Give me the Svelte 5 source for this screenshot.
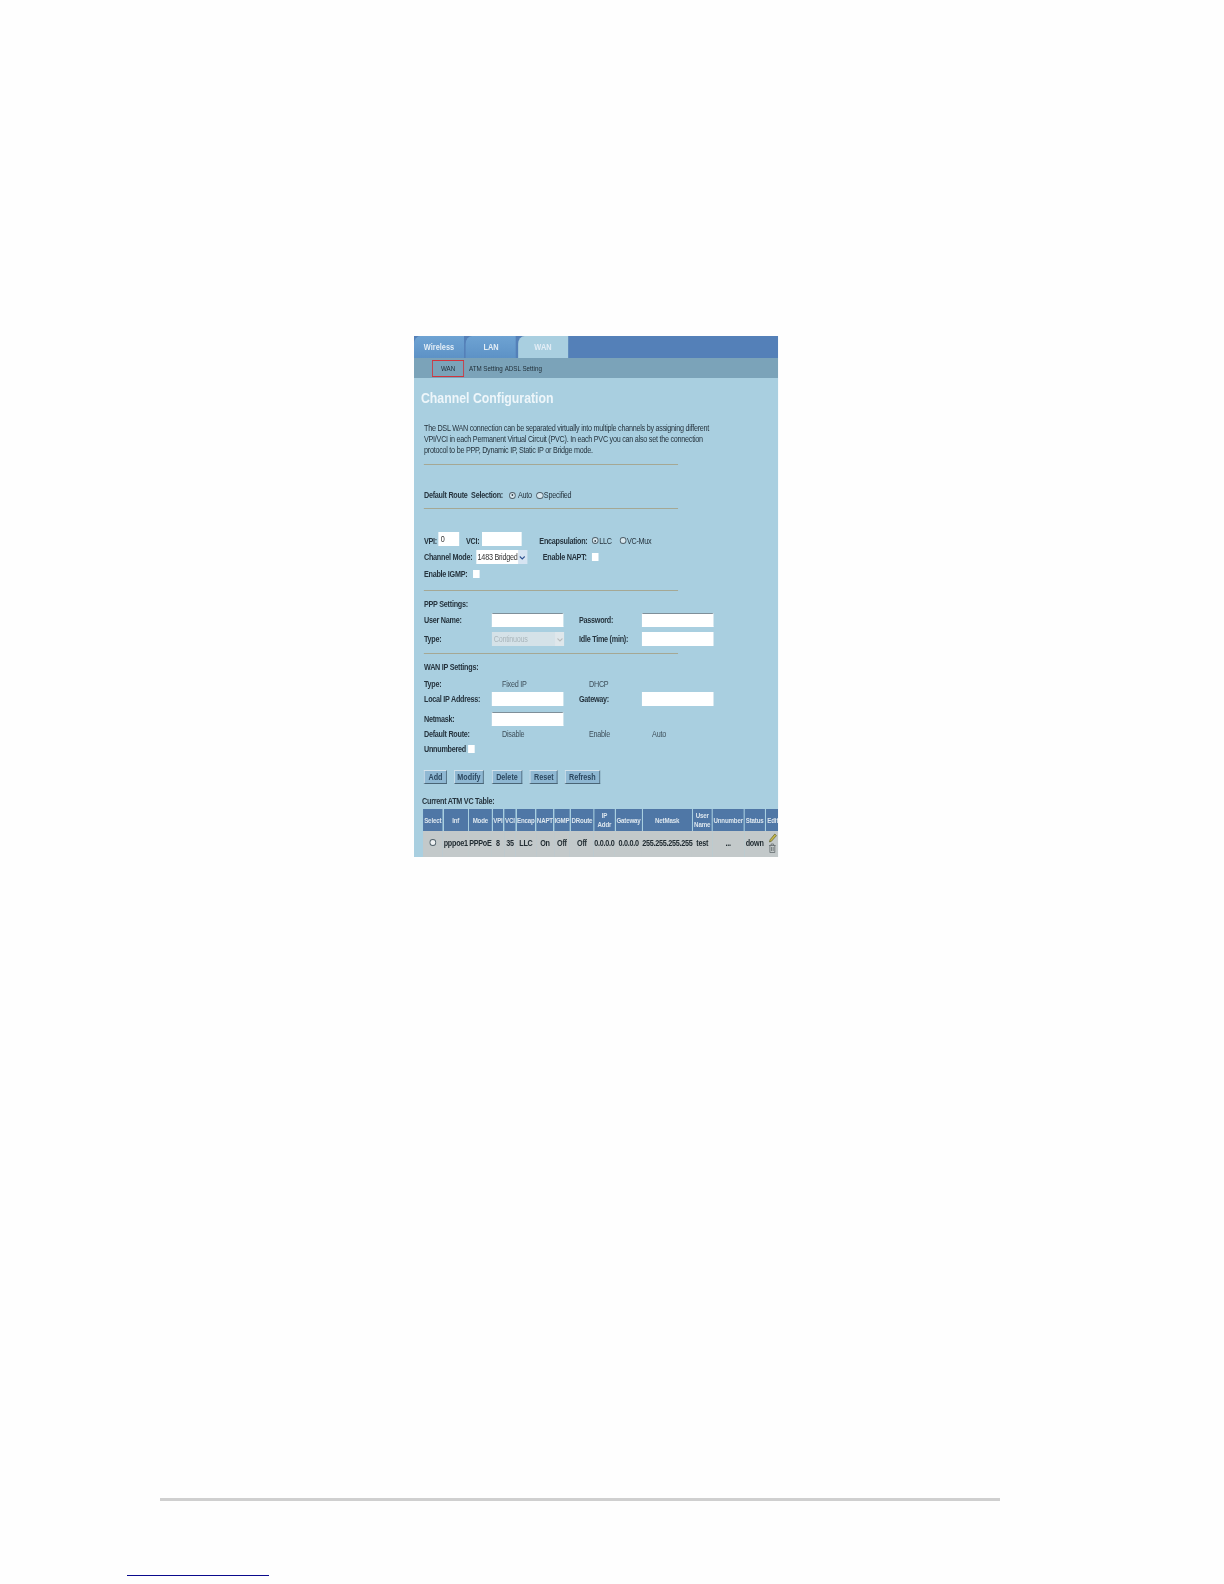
<script>
    let columns = [
        { name: "Select", width: 24.4 },
        { name: "Inf", width: 31.7 },
        { name: "Mode", width: 28.3 },
        { name: "VPI", width: 14.6 },
        { name: "VCI", width: 14.6 },
        { name: "Encap", width: 24.4 },
        { name: "NAPT", width: 22 },
        { name: "IGMP", width: 19.5 },
        { name: "DRoute", width: 29.3 },
        { name: "IP Addr", width: 25.6 },
        { name: "Gateway", width: 33.2 },
        { name: "NetMask", width: 61 },
        { name: "User Name", width: 24.4 },
        { name: "Unnumber", width: 39 },
        { name: "Status", width: 25.6 },
        { name: "Edit", width: 18.3 }
    ];

    let cells = ["pppoe1", "PPPoE", "8", "35", "LLC", "On", "Off", "Off", "0.0.0.0", "0.0.0.0", "255.255.255.255", "test", "...", "down"];
</script>

<div class="page">
    <!-- the whole panel is a squeezed screenshot, so it is built wider and scaled down on x -->
    <div class="panel">
        <div class="tabs">
            <div class="tab">Wireless</div>
            <div class="tab">LAN</div>
            <div class="tab active">WAN</div>
        </div>
        <div class="subbar">
            <span class="sub current">WAN</span>
            <span class="sub">ATM Setting</span>
            <span class="sub">ADSL Setting</span>
        </div>

        <div class="content">
            <h1>Channel Configuration</h1>
            <p class="intro">
                The DSL WAN connection can be separated virtually into multiple channels by assigning different<br />
                VPI/VCI in each Permanent Virtual Circuit (PVC). In each PVC you can also set the connection<br />
                protocol to be PPP, Dynamic IP, Static IP or Bridge mode.
            </p>
            <hr class="rule-a" />

            <div class="row route">
                <b class="route-label">Default Route&nbsp; Selection:</b>
                <span class="radio on"></span><span class="auto-text">Auto</span>
                <span class="radio"></span><span class="after-radio">Specified</span>
            </div>
            <hr class="rule-b" />

            <div class="row vpi">
                <b class="vpi-label">VPI:</b>
                <input class="small" value="0" />
                <b class="vci-label">VCI:</b>
                <input class="medium" />
                <b class="encap-label">Encapsulation:</b>
                <span class="radio on"></span><span class="llc-text">LLC</span>
                <span class="radio"></span><span class="after-radio">VC-Mux</span>
            </div>
            <div class="row mode">
                <b class="mode-label">Channel Mode:</b>
                <span class="select">1483 Bridged<span class="arrow">
                    <svg width="8" height="7" viewBox="0 0 8 7"><path d="M1 2.5 L4 5 L7 2.5" fill="none" stroke="#2c4f8f" stroke-width="1.3" /></svg>
                </span></span>
                <b class="napt-label">Enable NAPT:</b>
                <span class="check"></span>
            </div>
            <div class="row igmp">
                <b class="igmp-label">Enable IGMP:</b>
                <span class="check"></span>
            </div>
            <hr class="rule-c" />

            <div class="row ppp-title"><b>PPP Settings:</b></div>
            <div class="grid ppp">
                <b>User Name:</b>
                <input class="wide" />
                <b>Password:</b>
                <input class="wide" />
                <b>Type:</b>
                <span class="select disabled">Continuous<span class="arrow">
                    <svg width="8" height="7" viewBox="0 0 8 7"><path d="M1 2.5 L4 5 L7 2.5" fill="none" stroke="#b9bdbf" stroke-width="1.2" /></svg>
                </span></span>
                <b>Idle Time (min):</b>
                <input class="wide flat" />
            </div>
            <hr class="rule-d" />

            <div class="row wan-title"><b>WAN IP Settings:</b></div>
            <div class="grid wan">
                <b>Type:</b>
                <span class="opt">Fixed IP</span>
                <span class="opt">DHCP</span>
                <span></span>
                <b>Local IP Address:</b>
                <input class="wide flat" />
                <b>Gateway:</b>
                <input class="wide flat" />
                <b>Netmask:</b>
                <input class="wide" />
                <span></span>
                <span></span>
                <b>Default Route:</b>
                <span class="opt">Disable</span>
                <span class="opt">Enable</span>
                <span class="opt">Auto</span>
            </div>
            <div class="row unnumbered">
                <b class="unnumbered-label">Unnumbered</b>
                <span class="check"></span>
            </div>

            <div class="buttons">
                <button class="b-add">Add</button>
                <button class="b-modify">Modify</button>
                <button class="b-delete">Delete</button>
                <button class="b-reset">Reset</button>
                <button class="b-refresh">Refresh</button>
            </div>

            <div class="table-title"><b>Current ATM VC Table:</b></div>
            <table>
                <colgroup>
                    {#each columns as col}
                        <col style="width: {col.width}px" />
                    {/each}
                </colgroup>
                <thead>
                    <tr>
                        {#each columns as col}
                            <th>
                                {#each col.name.split(" ") as word}
                                    <span class="word">{word}</span>
                                {/each}
                            </th>
                        {/each}
                    </tr>
                </thead>
                <tbody>
                    <tr>
                        <td><span class="radio"></span></td>
                        {#each cells as cell}
                            <td>{cell}</td>
                        {/each}
                        <td class="edit">
                            <svg width="11" height="10" viewBox="0 0 11 10">
                                <path d="M1.5 9 L2.2 6.8 L8 1 L10 2.6 L4 8.2 Z" fill="#c8b84a" stroke="#55581f" stroke-width="0.7" />
                            </svg>
                            <svg width="10" height="10" viewBox="0 0 10 10">
                                <path d="M1 2.5 H9 M3.5 2.5 V1 H6.5 V2.5 M2 2.5 V9.5 H8 V2.5 M4 4 V8 M6 4 V8" fill="none" stroke="#5c6468" stroke-width="0.8" />
                            </svg>
                        </td>
                    </tr>
                </tbody>
            </table>
        </div>
    </div>

    <div class="footer-rule"></div>
    <div class="footnote-rule"></div>
</div>

<style>
    :global(body) {
        margin: 0;
        background: #fefefe;
    }
    .page {
        width: 1224px;
        height: 1584px;
        padding-top: 336px;
        box-sizing: border-box;
        position: relative;
        overflow: hidden;
    }
    .panel {
        width: 444px;
        height: 521px;
        margin-left: 414px;
        background: #a9cfe0;
        overflow: hidden;
        font-family: "Liberation Sans", Arial, sans-serif;
        font-size: 8.8px;
        letter-spacing: -0.31px;
        color: #26343e;
        transform: scaleX(0.82);
        transform-origin: left top;
        filter: blur(0.3px);
    }
    .tabs {
        display: flex;
        height: 22px;
        gap: 2.4px;
        background: #5480b8;
    }
    .tab {
        width: 61px;
        background: linear-gradient(#6ea3d3, #5d92c6);
        border-radius: 8px 0 0 0;
        color: #e4eef6;
        font-size: 9px;
        letter-spacing: 0;
        font-weight: bold;
        text-align: center;
        line-height: 22px;
    }
    .tab.active {
        background: #a9cfe0;
    }
    .subbar {
        display: flex;
        align-items: center;
        height: 20px;
        padding-left: 22px;
        background: #7ba3b9;
        font-size: 7.6px;
        letter-spacing: 0;
        color: #1f2d36;
    }
    .sub {
        margin-right: 2.4px;
    }
    .sub.current {
        width: 39px;
        height: 17px;
        margin-right: 6px;
        border: 1px solid #d0343c;
        box-sizing: border-box;
        line-height: 15px;
        text-align: center;
    }
    .content {
        padding-left: 12.2px;
    }
    h1 {
        margin: 10px 0 0 -3.7px;
        font-size: 15px;
        letter-spacing: 0;
        line-height: 20px;
        color: #eef6fa;
    }
    .intro {
        margin: 15px 0 0;
        line-height: 11px;
        white-space: nowrap;
    }
    hr {
        width: 310px;
        height: 1px;
        margin: 0;
        border: none;
        background: #a5a894;
    }
    .rule-a {
        margin-top: 8px;
    }
    .rule-b {
        margin-top: 7px;
    }
    .rule-c {
        margin-top: 10px;
    }
    .rule-d {
        margin-top: 7px;
    }
    b {
        font-weight: bold;
        white-space: nowrap;
    }
    .row {
        display: flex;
        align-items: center;
    }
    .route {
        height: 12px;
        margin-top: 24px;
    }
    .route-label {
        width: 103.7px;
    }
    .auto-text {
        width: 22.6px;
        margin-left: 2.4px;
    }
    .after-radio {
        margin-left: 0.5px;
    }
    .vpi {
        height: 14px;
        margin-top: 23px;
    }
    .vpi b,
    .vpi span {
        margin-top: 3px;
    }
    .vpi-label {
        width: 18.3px;
    }
    .vci-label {
        width: 19.5px;
        margin-left: 8.5px;
    }
    .encap-label {
        width: 64px;
        margin-left: 22px;
    }
    .llc-text {
        width: 24.8px;
        margin-left: 0.5px;
    }
    .mode {
        height: 14px;
        margin-top: 4px;
    }
    .mode-label {
        width: 63.4px;
    }
    .napt-label {
        width: 59.8px;
        margin-left: 19.5px;
    }
    .igmp {
        height: 12px;
        margin-top: 4px;
    }
    .igmp-label {
        width: 59.8px;
    }
    .ppp-title {
        height: 10px;
        margin-top: 8px;
    }
    .grid {
        display: grid;
        grid-template-columns: 83px 106px 77px 87px;
        align-items: center;
    }
    .ppp {
        grid-template-rows: 14px 14px;
        row-gap: 5px;
        margin-top: 4px;
    }
    .wan-title {
        height: 10px;
        margin-top: 8px;
    }
    .wan {
        grid-template-rows: 11px 20px 19px 11px;
        margin-top: 6px;
    }
    .opt {
        padding-left: 12.2px;
        color: #3f505b;
    }
    .unnumbered {
        height: 12px;
        margin-top: 4px;
    }
    .unnumbered-label {
        width: 53.7px;
    }
    input {
        box-sizing: border-box;
        margin: 0;
        padding: 0 1px;
        height: 14px;
        border: 1px solid #fff;
        background: #fff;
        font: 8.8px "Liberation Sans", Arial, sans-serif;
        color: #333;
    }
    .small {
        width: 24.4px;
    }
    .medium {
        width: 48px;
    }
    .wide {
        width: 87px;
        border-top: 1px solid #7f8f99;
    }
    .wide.flat {
        border-top: 1px solid #fff;
    }
    .select {
        display: flex;
        align-items: center;
        justify-content: space-between;
        box-sizing: border-box;
        width: 62px;
        height: 14px;
        padding-left: 2px;
        background: #fff;
        color: #333;
        white-space: nowrap;
    }
    .arrow {
        display: flex;
        align-items: center;
        justify-content: center;
        width: 11px;
        height: 14px;
        background: #d6e4f2;
    }
    .select.disabled {
        width: 88px;
        background: #d5e2e8;
        color: #aab6bc;
    }
    .select.disabled .arrow {
        background: #dfe7eb;
    }
    .radio {
        display: inline-block;
        flex: none;
        width: 8.5px;
        height: 7px;
        box-sizing: border-box;
        border: 1px solid #50606a;
        border-radius: 50%;
        background: #d9e8ef;
        position: relative;
    }
    .radio.on::after {
        content: "";
        position: absolute;
        left: 2px;
        top: 1.5px;
        width: 2.5px;
        height: 2px;
        border-radius: 50%;
        background: #2c3a44;
    }
    .check {
        display: inline-block;
        width: 8.5px;
        height: 8px;
        background: #fff;
    }
    .buttons {
        display: flex;
        margin-top: 15px;
    }
    button {
        height: 14px;
        padding: 0;
        box-sizing: border-box;
        border: 1px solid #55707f;
        border-color: #d6e4ec #4a6576 #4a6576 #d6e4ec;
        background: #8fb8d3;
        font: bold 8.8px "Liberation Sans", Arial, sans-serif;
        color: #2c4860;
    }
    .b-add {
        width: 28px;
        margin-right: 8.5px;
    }
    .b-modify {
        width: 36.6px;
        margin-right: 9.8px;
    }
    .b-delete {
        width: 36.6px;
        margin-right: 9.8px;
    }
    .b-reset {
        width: 34px;
        margin-right: 8.5px;
    }
    .b-refresh {
        width: 42.7px;
    }
    .table-title {
        margin: 12px 0 0 -2.4px;
        height: 10px;
        line-height: 10px;
    }
    table {
        table-layout: fixed;
        width: 436px;
        margin: 3px 0 0 -2px;
        border-collapse: collapse;
    }
    th {
        height: 22px;
        padding: 0;
        border-left: 1px solid #a9cfe0;
        background: #4f77a6;
        color: #dce6ee;
        font-size: 7.5px;
        letter-spacing: -0.2px;
        font-weight: bold;
        text-align: center;
        line-height: 9px;
        overflow: hidden;
    }
    .word {
        display: block;
    }
    td {
        height: 26px;
        padding: 0 0 2px;
        box-sizing: border-box;
        background: #c3c9ca;
        color: #222d33;
        font-weight: bold;
        text-align: center;
        white-space: nowrap;
    }
    td .radio {
        background: #eef1f2;
    }
    .edit svg {
        display: block;
        margin: 0 auto;
    }
    .footer-rule {
        position: absolute;
        left: 160px;
        top: 1498px;
        width: 840px;
        height: 3px;
        background: #cfcfcf;
    }
    .footnote-rule {
        position: absolute;
        left: 127px;
        top: 1575px;
        width: 142px;
        height: 1px;
        background: #0a0a8c;
    }
</style>
